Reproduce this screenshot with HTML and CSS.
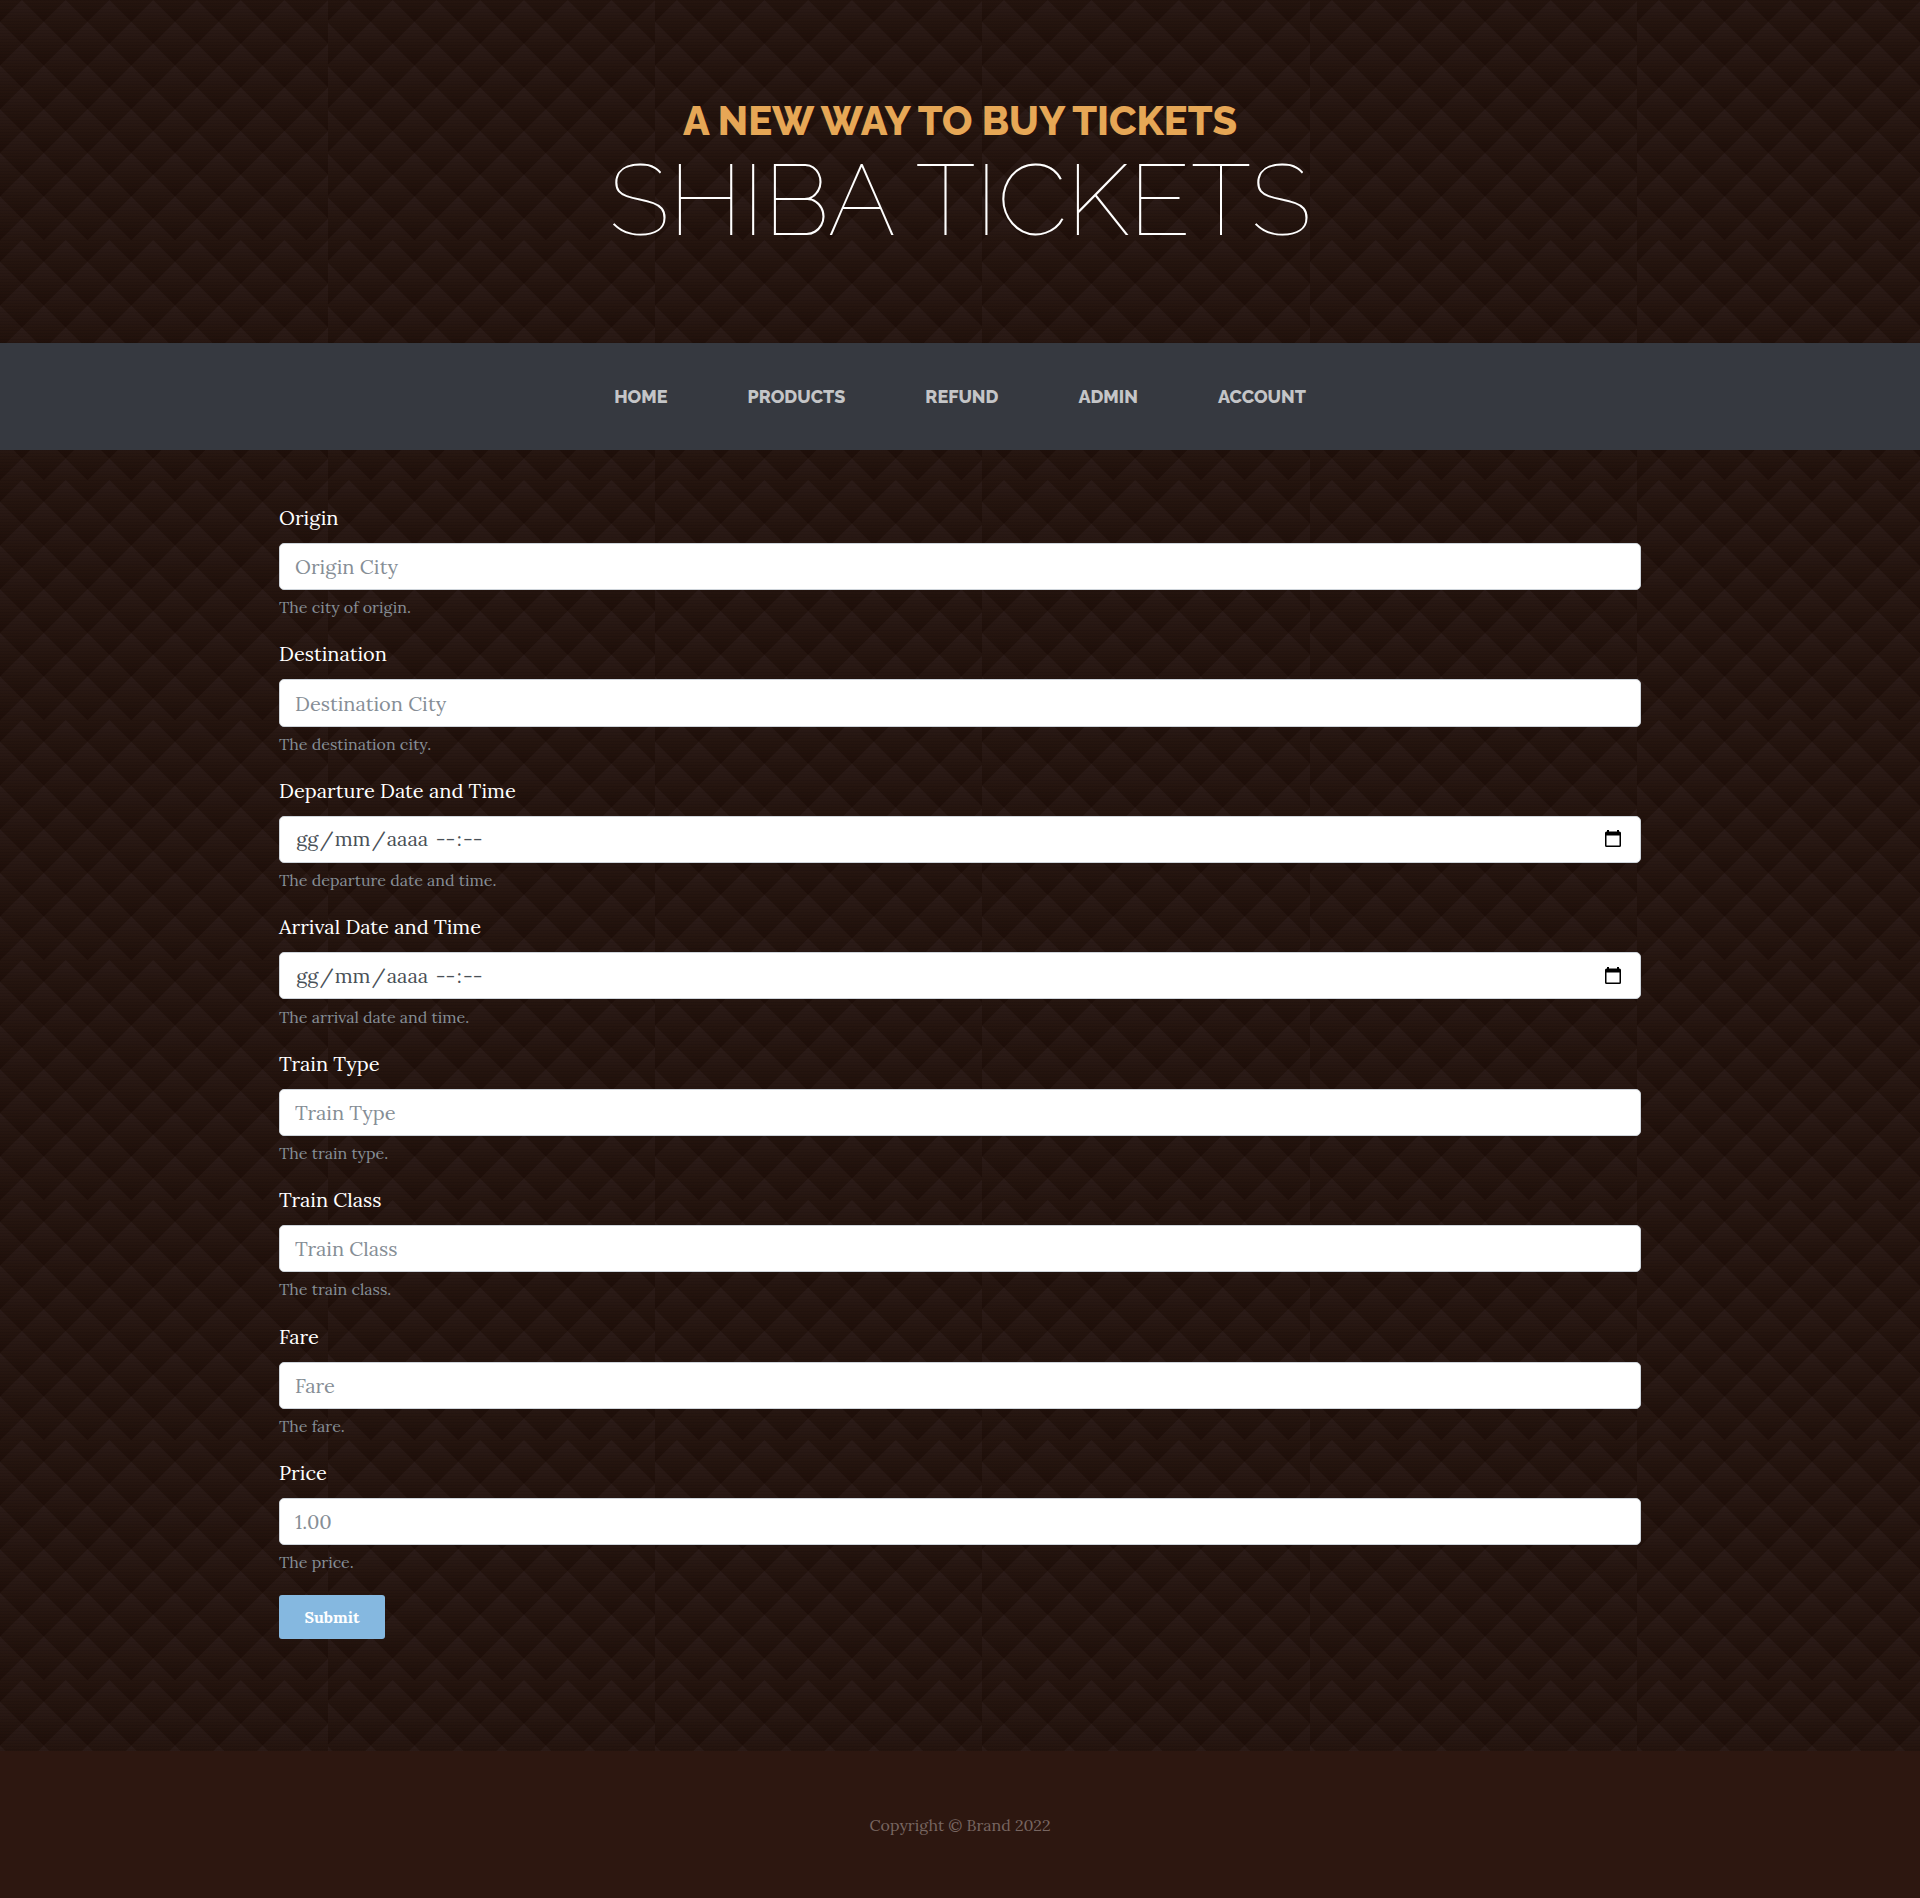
FILE: index.html
```
<!DOCTYPE html>
<html lang="en">
<head>
<meta charset="utf-8">
<title>Shiba Tickets</title>
<link rel="stylesheet" href="styles.css">
</head>
<body>
<header class="site-header">
  <h1 class="site-heading">
    <span class="site-heading-upper">A NEW WAY TO BUY TICKETS</span>
    <span class="site-heading-lower">SHIBA TICKETS</span>
  </h1>
</header>
<nav class="site-nav">
  <a>HOME</a>
  <a>PRODUCTS</a>
  <a>REFUND</a>
  <a>ADMIN</a>
  <a>ACCOUNT</a>
</nav>
<main class="container">
  <form>
    <div class="field"><label>Origin</label><input class="control" placeholder="Origin City"><small>The city of origin.</small></div>
    <div class="field"><label>Destination</label><input class="control" placeholder="Destination City"><small>The destination city.</small></div>
    <div class="field"><label>Departure Date and Time</label><div class="control date"><span class="date-text"><i>gg</i>/<i>mm</i>/<i>aaaa</i> <i>--</i>:<i>--</i></span><svg class="calendar" viewBox="0 0 16 17"><path d="M2 0h2v1.5h8V0h2v1.5h.5A1.5 1.5 0 0 1 16 3v12.5a1.5 1.5 0 0 1-1.500 1.500h-13A1.500 1.500 0 0 1 0 15.500V3a1.500 1.500 0 0 1 1.500-1.500H2zM1.500 5.500v10h13v-10z"/></svg></div><small>The departure date and time.</small></div>
    <div class="field"><label>Arrival Date and Time</label><div class="control date"><span class="date-text"><i>gg</i>/<i>mm</i>/<i>aaaa</i> <i>--</i>:<i>--</i></span><svg class="calendar" viewBox="0 0 16 17"><path d="M2 0h2v1.5h8V0h2v1.5h.5A1.5 1.5 0 0 1 16 3v12.5a1.5 1.5 0 0 1-1.500 1.500h-13A1.500 1.500 0 0 1 0 15.500V3a1.500 1.500 0 0 1 1.500-1.500H2zM1.500 5.500v10h13v-10z"/></svg></div><small>The arrival date and time.</small></div>
    <div class="field"><label>Train Type</label><input class="control" placeholder="Train Type"><small>The train type.</small></div>
    <div class="field"><label>Train Class</label><input class="control" placeholder="Train Class"><small>The train class.</small></div>
    <div class="field"><label>Fare</label><input class="control" placeholder="Fare"><small>The fare.</small></div>
    <div class="field"><label>Price</label><input class="control" placeholder="1.00"><small>The price.</small></div>
    <button class="submit" type="button">Submit</button>
  </form>
</main>
<footer class="footer"><p>Copyright © Brand 2022</p></footer>
</body>
</html>
```
FILE: styles.css
```
* { box-sizing: border-box; }
body {
  margin: 0;
  min-height: 1898px;
  display: flex;
  flex-direction: column;
  font-family: Lora, "Liberation Serif", serif;
  color: #fff;
  background-color: #24140e;
  /* tile of shaded diamonds: zigzag-topped rows, each overlapping the one above */
  background-image: url("data:image/svg+xml,%3Csvg xmlns='http://www.w3.org/2000/svg' width='327.500' height='240' viewBox='0 0 327.500 240' preserveAspectRatio='none'%3E%3Cdefs%3E%3ClinearGradient id='g' gradientUnits='userSpaceOnUse' x1='0' y1='0' x2='0' y2='44'%3E%3Cstop offset='0' stop-color='%232c1c19'/%3E%3Cstop offset='.5' stop-color='%2325150f'/%3E%3Cstop offset='1' stop-color='%231e0e09'/%3E%3C/linearGradient%3E%3Cpath id='r' fill='url(%23g)' d='M-44 22l22-22l22 22l22-22l22 22l22-22l22 22l22-22l22 22l22-22l22 22l22-22l22 22l22-22l22 22l22-22l22 22l22-22l22 22V44H-44Z'/%3E%3Cpattern id='l' width='4' height='3' patternUnits='userSpaceOnUse'%3E%3Cpath d='M0 0h4v1H0z' fill='%23000' fill-opacity='.08'/%3E%3C/pattern%3E%3C/defs%3E%3Cg transform='scale(.993)'%3E%3Cuse href='%23r' x='22' y='-22'/%3E%3Cuse href='%23r'/%3E%3Cuse href='%23r' x='22' y='22'/%3E%3Cuse href='%23r' y='44'/%3E%3Cuse href='%23r' x='22' y='66'/%3E%3Cuse href='%23r' y='88'/%3E%3Cuse href='%23r' x='22' y='110'/%3E%3Cuse href='%23r' y='132'/%3E%3Cuse href='%23r' x='22' y='154'/%3E%3Cuse href='%23r' y='176'/%3E%3Cuse href='%23r' x='22' y='198'/%3E%3Cuse href='%23r' y='220'/%3E%3C/g%3E%3Cpath d='M0 0h328v240H0z' fill='url(%23l)'/%3E%3C/svg%3E");
  background-size: 327.500px 240px;
}
.site-header { height: 343px; padding-top: 97px; text-align: center; }
.site-heading { margin: 0; display: flex; flex-direction: column; font-family: Raleway, Lato, sans-serif; }
.site-heading-upper { font-size: 40px; font-weight: 800; line-height: 48px; color: #e6a756; }
.site-heading-lower { font-size: 100px; font-weight: 100; line-height: 110px; }
.site-nav {
  height: 107px;
  background: #363940;
  display: flex;
  justify-content: center;
  align-items: center;
  gap: 80px;
  font: 800 18px Raleway, Lato, sans-serif;
  color: #c4c5c7;
}
.container { width: 1362px; margin: 0 auto; padding-top: 54px; height: 1301px; }
.field { height: 136.430px; display: flex; flex-direction: column; }
label { font-size: 20px; line-height: 28px; margin-bottom: 11px; }
.control {
  width: 100%;
  height: 47.200px;
  flex: none;
  padding: 0 15px;
  border: 1px solid #ced4da;
  border-radius: 5px;
  background: #fff;
  font: 20px Lora, "Liberation Serif", serif;
  color: #495057;
}
.control::placeholder { color: #868e96; opacity: 1; }
.date { display: flex; align-items: center; justify-content: space-between; padding: 0 19px 1.500px 15px; }
.date-text i { font-style: normal; padding: 0 1.250px; }
.calendar { width: 16px; height: 17px; fill: #000; }
small { font-size: 16px; line-height: 24px; margin-top: 5.200px; color: #868e96; }
.submit {
  display: block;
  width: 106px;
  height: 44px;
  padding: 0;
  border: 0;
  border-radius: 3px;
  background: #85b8e0;
  color: #fff;
  font: bold 16px Lora, "Liberation Serif", serif;
}
.footer { height: 147px; background: #2d1710; text-align: center; }
.footer p { margin: 0; padding-top: 62px; font-size: 16px; line-height: 24px; color: #786661; }
```
